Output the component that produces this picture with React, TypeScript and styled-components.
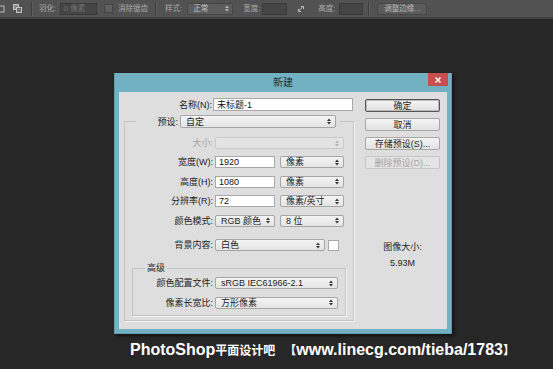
import styled, { createGlobalStyle } from 'styled-components'

const GlobalStyle = createGlobalStyle`
  html, body {
    margin: 0;
    padding: 0;
    background: #272727;
  }
  body {
    width: 553px;
    height: 369px;
    overflow: hidden;
    font-family: "Liberation Sans", "Noto Sans CJK SC", sans-serif;
  }
`

function Arrows({ disabled }: { disabled?: boolean }) {
  const c = disabled ? '#b4b4b4' : '#333'
  return (
    <svg width="4" height="7" viewBox="0 0 4 7">
      <path d="M0 3 L2 0.5 L4 3 Z" fill={c} />
      <path d="M0 4 L2 6.5 L4 4 Z" fill={c} />
    </svg>
  )
}

export default function App() {
  return (
    <Page>
      <GlobalStyle />
      <Toolbar>
        <ToolIcon $ml={0}>
          <svg width="6" height="8" viewBox="0 0 6 8">
            <rect x="-3" y="1" width="7" height="6" fill="none" stroke="#b8b8b8" strokeWidth="1" />
          </svg>
        </ToolIcon>
        <ToolIcon $ml={7}>
          <svg width="9" height="9" viewBox="0 0 9 9">
            <rect x="0.5" y="0.5" width="5" height="5" fill="#8a8a8a" stroke="#c4c4c4" />
            <rect x="3.5" y="3.5" width="5" height="5" fill="#6a6a6a" stroke="#c4c4c4" />
          </svg>
        </ToolIcon>
        <ToolSep $ml={9} />
        <ToolLabel $ml={6}>羽化:</ToolLabel>
        <ToolInput $w={37} $ml={4}>0 像素</ToolInput>
        <ToolCheck />
        <ToolLabel $ml={5}>消除锯齿</ToolLabel>
        <ToolSep $ml={7} />
        <ToolLabel $ml={8}>样式:</ToolLabel>
        <ToolSelect>
          正常
          <Arrows disabled />
        </ToolSelect>
        <ToolLabel $ml={10}>宽度:</ToolLabel>
        <ToolInput $w={25} $ml={2} />
        <ToolIcon $ml={10}>
          <svg width="8" height="8" viewBox="0 0 8 8">
            <path d="M1 6.5 L6 1.5 M4 1.5 L6.5 1.5 L6.5 4 M1.5 4 L1.5 6.5 L4 6.5" fill="none" stroke="#bdbdbd" strokeWidth="1" />
          </svg>
        </ToolIcon>
        <ToolLabel $ml={13}>高度:</ToolLabel>
        <ToolInput $w={24} $ml={4} />
        <ToolSep $ml={5} />
        <ToolButton>调整边缘...</ToolButton>
      </Toolbar>

      <Stage>
        <Dialog>
          <TitleBar>
            <span />
            <Title>新建</Title>
            <CloseButton>
              <svg width="6" height="6" viewBox="0 0 6 6">
                <path d="M0.5 0.5 L5.5 5.5 M5.5 0.5 L0.5 5.5" stroke="#fff" strokeWidth="1.4" />
              </svg>
            </CloseButton>
          </TitleBar>

          <Content>
            <LeftCol>
              <NameRow>
                <NameLabel>名称(N):</NameLabel>
                <TextInput $w={140} $h={13}>未标题-1</TextInput>
              </NameRow>

              <Group>
                <PresetLegend>
                  <PresetLabel>预设:</PresetLabel>
                  <Select $w={156} $h={13}>
                    自定
                    <Arrows />
                  </Select>
                </PresetLegend>

                <RowStack>
                  <Row>
                    <Label $w={88} $disabled>大小:</Label>
                    <Select $w={129} $disabled>
                      <span />
                      <Arrows disabled />
                    </Select>
                  </Row>
                  <Row>
                    <Label $w={88}>宽度(W):</Label>
                    <TextInput $w={60}>1920</TextInput>
                    <Select $w={64} $ml={5}>
                      像素
                      <Arrows />
                    </Select>
                  </Row>
                  <Row>
                    <Label $w={88}>高度(H):</Label>
                    <TextInput $w={60}>1080</TextInput>
                    <Select $w={64} $ml={5}>
                      像素
                      <Arrows />
                    </Select>
                  </Row>
                  <Row>
                    <Label $w={88}>分辨率(R):</Label>
                    <TextInput $w={60}>72</TextInput>
                    <Select $w={64} $ml={5}>
                      像素/英寸
                      <Arrows />
                    </Select>
                  </Row>
                  <Row>
                    <Label $w={88}>颜色模式:</Label>
                    <Select $w={60}>
                      RGB 颜色
                      <Arrows />
                    </Select>
                    <Select $w={64} $ml={5}>
                      8 位
                      <Arrows />
                    </Select>
                  </Row>
                  <Row $mt={5.5}>
                    <Label $w={88}>背景内容:</Label>
                    <Select $w={110}>
                      白色
                      <Arrows />
                    </Select>
                    <Swatch />
                  </Row>
                </RowStack>

                <AdvancedGroup>
                  <AdvancedLegend>高级</AdvancedLegend>
                  <RowStack>
                    <Row>
                      <Label $w={80}>颜色配置文件:</Label>
                      <Select $w={123}>
                        sRGB IEC61966-2.1
                        <Arrows />
                      </Select>
                    </Row>
                    <Row>
                      <Label $w={80}>像素长宽比:</Label>
                      <Select $w={123}>
                        方形像素
                        <Arrows />
                      </Select>
                    </Row>
                  </RowStack>
                </AdvancedGroup>
              </Group>
            </LeftCol>

            <RightCol>
              <DialogButton $primary>确定</DialogButton>
              <DialogButton>取消</DialogButton>
              <DialogButton>存储预设(S)...</DialogButton>
              <DialogButton $disabled>删除预设(D)...</DialogButton>
              <SizeInfo>
                <span>图像大小:</span>
                <span>5.93M</span>
              </SizeInfo>
            </RightCol>
          </Content>
        </Dialog>

        <Watermark>
          PhotoShop<Cjk>平面设计吧</Cjk>
          <Bracket>【</Bracket>www.linecg.com/tieba/1783<Cjk>】</Cjk>
        </Watermark>
      </Stage>
    </Page>
  )
}

const Page = styled.div`
  width: 553px;
  height: 369px;
  display: flex;
  flex-direction: column;
  background: #272727;
  overflow: hidden;
`

/* ---------- toolbar ---------- */

const Toolbar = styled.div`
  flex-shrink: 0;
  height: 17px;
  display: flex;
  align-items: center;
  background: #525252;
  border-bottom: 2px solid #404040;
  font-size: 7.5px;
  line-height: 10px;
  color: #a9a9a9;
  white-space: nowrap;
  overflow: hidden;
`

const ToolIcon = styled.div<{ $ml: number }>`
  display: flex;
  align-items: center;
  margin-left: ${p => p.$ml}px;
`

const ToolSep = styled.div<{ $ml: number }>`
  width: 1px;
  height: 14px;
  margin-left: ${p => p.$ml}px;
  background: #3c3c3c;
  border-right: 1px solid #5e5e5e;
`

const ToolLabel = styled.span<{ $ml: number }>`
  margin-left: ${p => p.$ml}px;
`

const ToolInput = styled.div<{ $w: number; $ml: number }>`
  width: ${p => p.$w}px;
  height: 12px;
  box-sizing: border-box;
  margin-left: ${p => p.$ml}px;
  padding-left: 3px;
  background: #454545;
  border: 1px solid #3a3a3a;
  color: #707070;
  line-height: 10px;
`

const ToolCheck = styled.div`
  width: 7px;
  height: 7px;
  margin-left: 7px;
  background: #606060;
  border: 1px solid #444;
`

const ToolSelect = styled.div`
  width: 46px;
  height: 12px;
  box-sizing: border-box;
  margin-left: 5px;
  padding: 0 3px 0 5px;
  display: flex;
  align-items: center;
  justify-content: space-between;
  background: #5c5c5c;
  border: 1px solid #464646;
  border-radius: 2px;
  color: #c2c2c2;
`

const ToolButton = styled.div`
  width: 50px;
  height: 12px;
  box-sizing: border-box;
  margin-left: 7px;
  display: flex;
  align-items: center;
  justify-content: center;
  background: #5b5b5b;
  border: 1px solid #474747;
  border-radius: 2px;
  color: #b9b9b9;
`

/* ---------- dialog ---------- */

const Stage = styled.div`
  flex: 1;
  min-height: 0;
  display: flex;
  flex-direction: column;
  align-items: flex-start;
  padding: 54px 0 0 114px;
`

const Dialog = styled.div`
  flex-shrink: 0;
  width: 338px;
  box-sizing: border-box;
  background: #71b1c2;
  border: 1px solid #5f9cad;
  border-top: none;
  padding: 0 4px 4px;
  box-shadow: 2px 2px 3px rgba(0, 0, 0, 0.55);
`

const TitleBar = styled.div`
  height: 19px;
  margin: 0 -4px;
  display: grid;
  grid-template-columns: 1fr auto 1fr;
  align-items: start;
`

const Title = styled.span`
  font-size: 10px;
  line-height: 19px;
  color: #1d2e33;
`

const CloseButton = styled.div`
  justify-self: end;
  width: 20px;
  height: 13px;
  margin-right: 3px;
  display: flex;
  align-items: center;
  justify-content: center;
  background: #c74f4f;
`

const Content = styled.div`
  display: flex;
  background: #dedede;
  font-size: 9px;
  line-height: 12px;
  color: #1f1f1f;
`

const LeftCol = styled.div`
  width: 230px;
  margin-left: 5px;
  padding: 6px 0 8px;
`

const NameRow = styled.div`
  display: flex;
  align-items: center;
  height: 13px;
`

const NameLabel = styled.span`
  width: 89px;
  padding-right: 1px;
  box-sizing: border-box;
  text-align: right;
`

const TextInput = styled.div<{ $w: number; $h?: number }>`
  width: ${p => p.$w}px;
  height: ${p => p.$h ?? 12}px;
  box-sizing: border-box;
  padding-left: 3px;
  display: flex;
  align-items: center;
  background: #fff;
  border: 1px solid #a8a8a8;
  color: #111;
`

const Select = styled.div<{ $w: number; $h?: number; $ml?: number; $disabled?: boolean }>`
  width: ${p => p.$w}px;
  height: ${p => p.$h ?? 12}px;
  box-sizing: border-box;
  margin-left: ${p => p.$ml ?? 0}px;
  padding: 0 4px 0 5px;
  display: flex;
  align-items: center;
  justify-content: space-between;
  border: 1px solid ${p => (p.$disabled ? '#cacaca' : '#a6a6a6')};
  border-radius: 2px;
  background: ${p => (p.$disabled ? '#e3e3e3' : 'linear-gradient(#f4f4f4, #e4e4e4)')};
  color: #1d1d1d;
`

const Group = styled.fieldset`
  margin: 4px 0 0;
  padding: 9px 0 4px;
  min-width: 0;
  border: 1px solid #c4c4c4;
  box-shadow: 1px 1px 0 #f4f4f4;
`

const PresetLegend = styled.legend`
  display: flex;
  align-items: center;
  margin-left: 11px;
  padding: 0 4px 0 0;
  height: 13px;
`

const PresetLabel = styled.span`
  width: 42px;
  margin-right: 2px;
  text-align: right;
`

const RowStack = styled.div`
  display: flex;
  flex-direction: column;
  gap: 7.4px;
`

const Row = styled.div<{ $mt?: number }>`
  display: flex;
  align-items: center;
  height: 12px;
  margin-top: ${p => p.$mt ?? 0}px;
`

const Label = styled.span<{ $w: number; $disabled?: boolean }>`
  width: ${p => p.$w}px;
  margin-right: 2px;
  text-align: right;
  color: ${p => (p.$disabled ? '#a3a3a3' : 'inherit')};
`

const Swatch = styled.div`
  width: 11px;
  height: 11px;
  box-sizing: border-box;
  margin-left: 3px;
  background: #fff;
  border: 1px solid #a9a9a9;
`

const AdvancedGroup = styled.fieldset`
  margin: 11px 7px 0;
  padding: 3px 0 6px;
  min-width: 0;
  border: 1px solid #c4c4c4;
  box-shadow: 1px 1px 0 #f4f4f4;
`

const AdvancedLegend = styled.legend`
  margin-left: 12px;
  padding: 0 2px;
  height: 12px;
  line-height: 12px;
`

const RightCol = styled.div`
  width: 75px;
  margin-left: 11px;
  padding-top: 7px;
  display: flex;
  flex-direction: column;
  gap: 6px;
`

const DialogButton = styled.div<{ $primary?: boolean; $disabled?: boolean }>`
  height: 13px;
  box-sizing: border-box;
  display: flex;
  align-items: center;
  justify-content: center;
  border: 1px solid ${p => (p.$primary ? '#555' : p.$disabled ? '#c6c6c6' : '#a7a7a7')};
  box-shadow: ${p => (p.$primary ? 'inset 0 0 0 1px #bcbcbc' : 'none')};
  border-radius: 2px;
  background: ${p => (p.$disabled ? '#e4e4e4' : 'linear-gradient(#f4f4f4, #e2e2e2)')};
  color: ${p => (p.$disabled ? '#a3a3a3' : '#1d1d1d')};
`

const SizeInfo = styled.div`
  margin-top: 66px;
  display: flex;
  flex-direction: column;
  align-items: center;
  gap: 4px;
  line-height: 12px;
`

/* ---------- watermark ---------- */

const Watermark = styled.div`
  flex-shrink: 0;
  margin: 6px 0 0 16px;
  font-size: 16px;
  line-height: 20px;
  font-weight: 700;
  color: #fff;
  white-space: nowrap;
`

const Cjk = styled.span`
  font-family: "Noto Sans CJK SC", sans-serif;
  font-size: 12px;
`

const Bracket = styled(Cjk)`
  margin-left: 9px;
`
